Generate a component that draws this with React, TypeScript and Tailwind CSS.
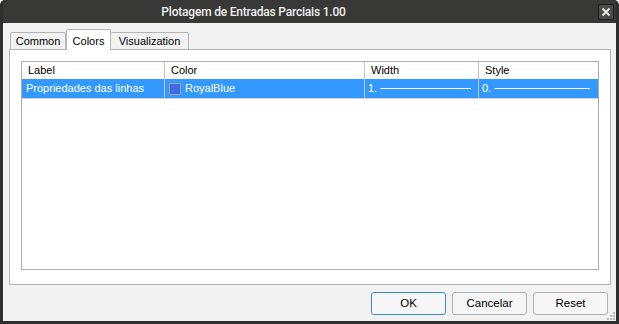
import React from "react";

export default function App() {
  const font = { fontFamily: "'Liberation Sans', Arial, sans-serif" };
  return (
    <div className="w-[619px] h-[324px] bg-[#2e2e2e] flex flex-col px-[3px] pb-[3px] rounded-t-[5px] overflow-hidden" style={font}>
      <div className="h-[23px] relative flex items-center justify-center bg-[#383836] pr-[112px]">
        <span className="text-[#f0f0f0] text-[12px] font-medium tracking-[-0.2px]" style={{ fontFamily: "Roboto, 'Liberation Sans', sans-serif" }}>
          Plotagem de Entradas Parciais 1.00
        </span>
        <div className="absolute right-[2px] top-[4px] w-[16px] h-[16px] rounded-[2px] border border-[#1e1e1e] bg-[#4a4a4a] flex items-center justify-center">
          <svg width="10" height="10" viewBox="0 0 10 10">
            <path d="M1.5 1.5 L8.5 8.5 M8.5 1.5 L1.5 8.5" stroke="#e8e8e8" strokeWidth="2" />
          </svg>
        </div>
      </div>
      <div className="flex-1 bg-[#f2f2f2] flex flex-col">
        <div className="flex items-end pl-[7px] pt-[6px] h-[26px] text-[11px] text-black relative z-10">
          <div className="h-[18px] w-[56px] flex items-center justify-center border border-[#b4b4b4] rounded-t-[2px] bg-[#f2f2f2] mb-[-1px]">Common</div>
          <div className="h-[21px] w-[45px] flex items-start justify-center pt-[3px] border border-b-0 border-[#b4b4b4] rounded-t-[2px] bg-white mb-[-1px] relative">Colors</div>
          <div className="h-[18px] w-[78px] flex items-center justify-center border border-l-0 border-[#b4b4b4] rounded-t-[2px] bg-[#f2f2f2] mb-[-1px]">Visualization</div>
        </div>
        <div className="ml-[6px] mr-[5px] h-[236px] bg-white border border-[#b4b4b4] px-[11px] pt-[11px]">
          <div className="h-[209px] border border-[#acacac] bg-white text-[11px]">
            <div className="flex h-[17px] items-center text-black">
              <div className="w-[143px] h-full flex items-center pl-[6px] border-r border-[#c4c4c4]">Label</div>
              <div className="w-[200px] h-full flex items-center pl-[6px] border-r border-[#c4c4c4]">Color</div>
              <div className="w-[114px] h-full flex items-center pl-[6px] border-r border-[#c4c4c4]">Width</div>
              <div className="flex-1 h-full flex items-center pl-[6px]">Style</div>
            </div>
            <div className="flex h-[20px] items-center bg-[#3399ff] text-white border-b border-[#d0d0d0]">
              <div className="w-[143px] h-full flex items-center pl-[4px] border-r border-[#c4c4c4]">Propriedades das linhas</div>
              <div className="w-[200px] h-full flex items-center pl-[4px] gap-[4px] border-r border-[#c4c4c4]">
                <span className="w-[12px] h-[12px] border border-[#a0a0a0] bg-[#4169e1] inline-block"></span>
                <span>RoyalBlue</span>
              </div>
              <div className="w-[114px] h-full flex items-center pl-[3px] pr-[7px] gap-[3px] border-r border-[#c4c4c4]">
                <span>1.</span>
                <span className="flex-1 h-[1px] bg-white"></span>
              </div>
              <div className="flex-1 h-full flex items-center pl-[3px] pr-[8px] gap-[3px]">
                <span>0.</span>
                <span className="flex-1 h-[1px] bg-white"></span>
              </div>
            </div>
          </div>
        </div>
        <div className="flex justify-end gap-[6px] pr-[8px] pt-[7px] text-[11.5px] text-black relative flex-1">
          <button className="w-[75px] h-[23px] rounded-[3px] border border-[#3c8ae0] bg-[#f6f6f6]">OK</button>
          <button className="w-[75px] h-[23px] rounded-[3px] border border-[#b0b0b0] bg-[#f6f6f6]">Cancelar</button>
          <button className="w-[75px] h-[23px] rounded-[3px] border border-[#b0b0b0] bg-[#f6f6f6]">Reset</button>
          <svg className="absolute right-[1px] bottom-[1px]" width="8" height="8" viewBox="0 0 8 8">
            <rect x="6" y="0" width="2" height="2" fill="#b8b8b8" />
            <rect x="3" y="3" width="2" height="2" fill="#b8b8b8" />
            <rect x="6" y="3" width="2" height="2" fill="#b8b8b8" />
            <rect x="0" y="6" width="2" height="2" fill="#b8b8b8" />
            <rect x="3" y="6" width="2" height="2" fill="#b8b8b8" />
            <rect x="6" y="6" width="2" height="2" fill="#b8b8b8" />
          </svg>
        </div>
      </div>
    </div>
  );
}
